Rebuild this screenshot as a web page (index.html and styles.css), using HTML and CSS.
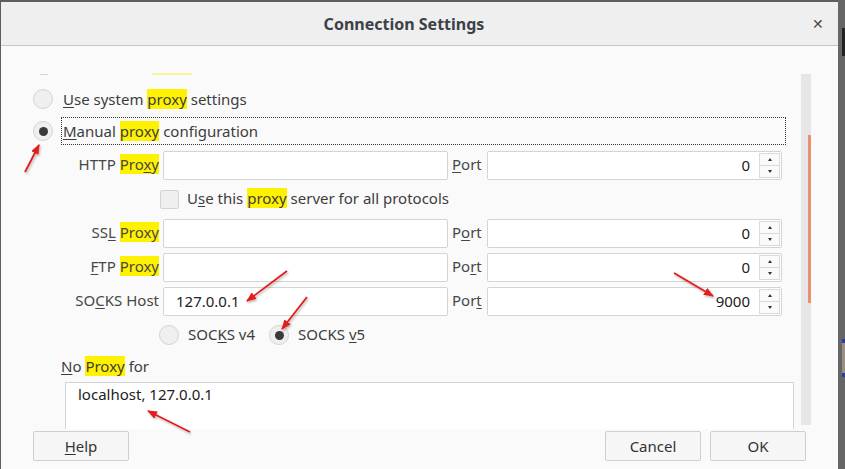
FILE: index.html
```html
<!DOCTYPE html>
<html>
<head>
<meta charset="utf-8">
<link rel="stylesheet" href="styles.css">
</head>
<body>
<div class="screen">
  <div class="dialog">
    <div class="titlebar">
      <span class="title">Connection Settings</span>
      <span class="close">&#x2715;</span>
    </div>
    <div class="main">
      <div class="content">
        <div class="remnant"><span class="r-radio"></span><span class="r-hl"></span></div>
        <div class="opt">
          <span class="radio"></span>
          <span class="txt"><span><u>U</u>se system <mark>proxy</mark> settings</span></span>
        </div>
        <div class="opt">
          <span class="radio on"></span>
          <span class="txt focus"><span><u>M</u>anual <mark>proxy</mark> configuration</span></span>
        </div>
        <div class="form">
          <div class="frow">
            <span class="lbl"><span>HTTP <mark>Pro<u>x</u>y</mark></span></span>
            <span class="field"></span>
            <span class="plbl"><span><u>P</u>ort</span></span>
            <span class="port"><span class="pval">0</span><span class="spin"><i class="up"></i><i class="dn"></i></span></span>
          </div>
          <div class="frow">
            <span class="lbl"></span>
            <span class="checkline"><span class="check"></span><span>U<u>s</u>e this <mark>proxy</mark> server for all protocols</span></span>
          </div>
          <div class="frow">
            <span class="lbl"><span>SS<u>L</u> <mark>Proxy</mark></span></span>
            <span class="field"></span>
            <span class="plbl"><span>P<u>o</u>rt</span></span>
            <span class="port"><span class="pval">0</span><span class="spin"><i class="up"></i><i class="dn"></i></span></span>
          </div>
          <div class="frow">
            <span class="lbl"><span><u>F</u>TP <mark>Proxy</mark></span></span>
            <span class="field"></span>
            <span class="plbl"><span>Po<u>r</u>t</span></span>
            <span class="port"><span class="pval">0</span><span class="spin"><i class="up"></i><i class="dn"></i></span></span>
          </div>
          <div class="frow">
            <span class="lbl"><span>SO<u>C</u>KS Host</span></span>
            <span class="field val">127.0.0.1</span>
            <span class="plbl"><span>Por<u>t</u></span></span>
            <span class="port"><span class="pval">9000</span><span class="spin"><i class="up"></i><i class="dn"></i></span></span>
          </div>
          <div class="frow socks">
            <span class="lbl"></span>
            <span class="socksline">
              <span class="radio"></span><span class="stxt">SOC<u>K</u>S v4</span>
              <span class="radio on"></span><span class="stxt">SOCKS <u>v</u>5</span>
            </span>
          </div>
        </div>
        <div class="nplabel"><u>N</u>o <mark>Proxy</mark> for</div>
        <div class="textarea">localhost, 127.0.0.1</div>
      </div>
      <div class="scrollbar"><div class="thumb"></div></div>
    </div>
    <div class="footer">
      <span class="btn"><span><u>H</u>elp</span></span>
      <span class="spacer"></span>
      <span class="btn">Cancel</span>
      <span class="btn">OK</span>
    </div>
  </div>
  <div class="desk">
    <span class="d-black"></span>
    <span class="d-gap"></span>
    <span class="d-blue"></span>
    <span class="d-tan"></span>
    <span class="d-blue"></span>
  </div>
  <svg class="arrows" width="845" height="469" viewBox="0 0 845 469">
    <defs>
      <marker id="ah" markerWidth="10" markerHeight="8" refX="9" refY="4" orient="auto" markerUnits="userSpaceOnUse">
        <path d="M0,0 L10,4 L0,8 Z" fill="#e31b1b"/>
      </marker>
      <filter id="sh" x="-20%" y="-20%" width="140%" height="140%">
        <feDropShadow dx="1" dy="1.5" stdDeviation="1.2" flood-color="#000" flood-opacity="0.3"/>
      </filter>
    </defs>
    <g stroke="#e31b1b" stroke-width="1.8" fill="none" marker-end="url(#ah)" filter="url(#sh)">
      <line x1="25" y1="172" x2="39" y2="145"/>
      <line x1="287" y1="271" x2="247" y2="301"/>
      <line x1="307" y1="297" x2="282" y2="329"/>
      <line x1="674" y1="273" x2="713" y2="296"/>
      <line x1="190" y1="432" x2="148" y2="411"/>
    </g>
  </svg>
</div>
</body>
</html>
```

FILE: styles.css
```css
html, body {
  margin: 0;
  padding: 0;
}
body {
  background: #5d5d5d;
  font-family: "Noto Sans", "Open Sans", sans-serif;
  font-size: 15px;
  color: #3d3d3d;
}
.screen {
  position: relative;
  width: 845px;
  height: 469px;
  box-sizing: border-box;
  padding-top: 2px;
  padding-left: 1px;
  display: flex;
  overflow: hidden;
}
.dialog {
  width: 837px;
  height: 467px;
  background: #fafafa;
  display: flex;
  flex-direction: column;
}
.titlebar {
  height: 43px;
  flex: none;
  background: #efefef;
  border-bottom: 1px solid #c6c6c6;
  display: flex;
  align-items: center;
}
.title {
  flex: 1;
  text-align: center;
  padding-right: 4px;
  font-weight: bold;
  font-size: 16px;
  color: #3c4148;
}
.close {
  width: 14px;
  margin-right: 13px;
  font-size: 14px;
  color: #4a4a4a;
  text-align: center;
}
.main {
  height: 383px;
  flex: none;
  display: flex;
}
.content {
  flex: 1;
  overflow: hidden;
  box-sizing: border-box;
  padding-left: 32px;
  padding-top: 26px;
}
mark {
  background: #fff200;
  color: inherit;
}
u {
  text-decoration-thickness: 1px;
  text-underline-offset: 2px;
}
.remnant {
  height: 3px;
  display: flex;
  align-items: flex-end;
}
.r-radio {
  width: 8px;
  height: 1px;
  margin-left: 7px;
  background: #d6d6d6;
}
.r-hl {
  width: 40px;
  height: 2px;
  margin-left: 104px;
  background: #faf3a0;
}
.opt {
  height: 30px;
  display: flex;
  align-items: center;
  margin-top: 9px;
}
.opt + .opt {
  margin-top: 2px;
}
.radio {
  width: 18px;
  height: 18px;
  border: 1px solid #d3d3d3;
  border-radius: 50%;
  background: #efefef;
  flex: none;
  display: flex;
  align-items: center;
  justify-content: center;
}
.radio.on::after {
  content: "";
  width: 9px;
  height: 9px;
  border-radius: 50%;
  background: #3a3a3a;
}
.opt .txt {
  margin-left: 8px;
  height: 28px;
  display: flex;
  align-items: center;
  padding-left: 1px;
  padding-bottom: 1px;
  box-sizing: border-box;
  border: 1px solid transparent;
}
.opt .txt.focus {
  flex: 1;
  margin-right: 15px;
  border: 1px dotted #333;
}
.form {
  margin-top: 5px;
  margin-left: 28px;
}
.frow {
  height: 34px;
  display: grid;
  grid-template-columns: 98px 285px 31px 295px;
  column-gap: 4px;
  align-items: start;
}
.lbl {
  height: 29px;
  box-sizing: border-box;
  padding-bottom: 3px;
  display: flex;
  align-items: center;
  justify-content: flex-end;
  color: #474747;
  white-space: nowrap;
}
.plbl {
  height: 29px;
  box-sizing: border-box;
  padding-bottom: 3px;
  display: flex;
  align-items: center;
  color: #474747;
}
.field {
  height: 27px;
  box-sizing: border-box;
  height: 29px;
  padding-bottom: 2px;
  border: 1px solid #d4d4d4;
  border-radius: 2px;
  background: #fff;
  display: flex;
  align-items: center;
  padding-left: 12px;
  color: #222;
}
.port {
  height: 29px;
  box-sizing: border-box;
  border: 1px solid #d4d4d4;
  border-radius: 2px;
  background: #fff;
  display: flex;
  align-items: center;
}
.pval {
  flex: 1;
  text-align: right;
  padding-right: 9px;
  padding-bottom: 2px;
  color: #222;
}
.spin {
  width: 19px;
  height: 23px;
  margin-right: 1px;
  border: 1px solid #dadada;
  display: flex;
  flex-direction: column;
  background: #fafafa;
}
.spin i {
  flex: 1;
  display: flex;
  align-items: center;
  justify-content: center;
}
.spin .up {
  border-bottom: 1px solid #dadada;
}
.spin .up::after {
  content: "";
  border-left: 2.5px solid transparent;
  border-right: 2.5px solid transparent;
  border-bottom: 3px solid #333;
}
.spin .dn::after {
  content: "";
  border-left: 2.5px solid transparent;
  border-right: 2.5px solid transparent;
  border-top: 3px solid #333;
}
.checkline {
  grid-column: 2 / 5;
  height: 29px;
  display: flex;
  align-items: center;
  margin-left: -3px;
  white-space: nowrap;
}
.check {
  width: 17px;
  height: 17px;
  border: 1px solid #d3d3d3;
  border-radius: 2px;
  background: #efefef;
  margin-right: 8px;
}
.checkline > span:last-child {
  padding-bottom: 3px;
}
.frow.socks {
  height: 28px;
}
.socksline {
  grid-column: 2 / 5;
  height: 28px;
  display: flex;
  align-items: center;
  margin-left: -4px;
}
.stxt {
  margin-left: 9px;
  margin-right: 14px;
  padding-bottom: 2px;
}
.nplabel {
  margin-top: 8px;
  margin-left: 28px;
  height: 20px;
  line-height: 18px;
}
.textarea {
  margin-top: 5px;
  margin-left: 32px;
  width: 715px;
  height: 60px;
  border: 1px solid #d4d4d4;
  background: #fff;
  padding: 1px 0 0 12px;
  color: #222;
  line-height: 20px;
}
.scrollbar {
  width: 10px;
  height: 351px;
  margin-top: 28px;
  margin-right: 27px;
  background: #e6e6e6;
  display: flex;
  flex-direction: column;
  align-items: flex-end;
}
.thumb {
  width: 3px;
  height: 168px;
  margin-top: 61px;
  background: #e9906e;
}
.footer {
  display: flex;
  align-items: flex-start;
  padding: 2px 32px 0 32px;
}
.spacer {
  flex: 1;
}
.btn {
  width: 94px;
  height: 28px;
  border: 1px solid #cfcfcf;
  border-radius: 2px;
  background: #f6f6f6;
  display: flex;
  align-items: center;
  justify-content: center;
  color: #333;
}
.btn + .btn {
  margin-left: 9px;
}
.desk {
  flex: 1;
  margin-top: -2px;
  background: #666;
  display: flex;
  flex-direction: column;
  align-items: flex-end;
}
.d-black {
  width: 3px;
  height: 28px;
  margin-top: 28px;
  background: #222;
}
.d-gap {
  height: 283px;
}
.d-blue {
  width: 3px;
  height: 4px;
  background: #2a3aa8;
}
.d-tan {
  width: 3px;
  height: 30px;
  background: #9a8f80;
}
.arrows {
  position: absolute;
  left: 0;
  top: 0;
  pointer-events: none;
}
```
